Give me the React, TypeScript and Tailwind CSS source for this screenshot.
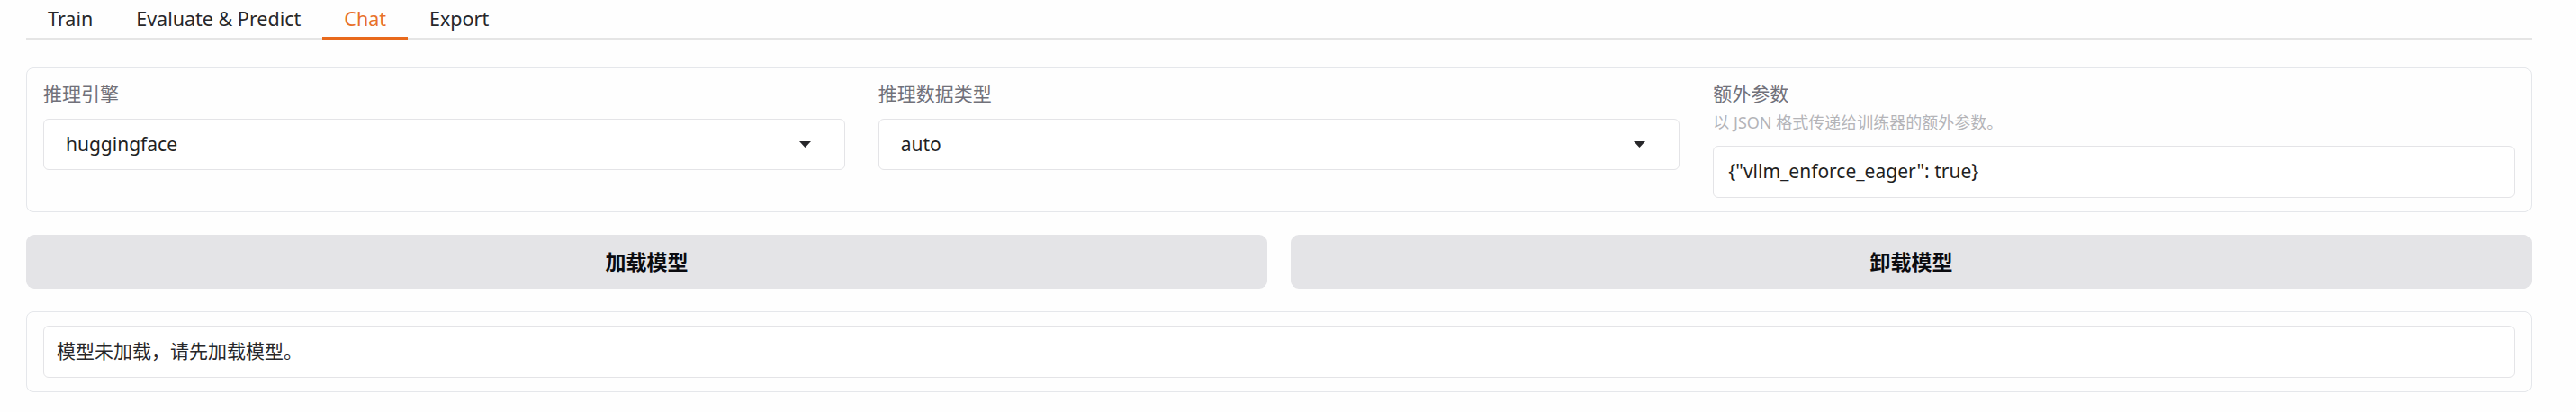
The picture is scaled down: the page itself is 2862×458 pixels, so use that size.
import React from "react";

function Arrow() {
  return (
    <svg width="13" height="7" viewBox="0 0 13 7" className="shrink-0">
      <path d="M0 0 L13 0 L6.5 7 Z" fill="#27272a" />
    </svg>
  );
}

function Dropdown({ label, value }: { label: string; value: string }) {
  return (
    <div className="flex flex-col">
      <div className="text-[21px] leading-[24px] text-[#71717a]">{label}</div>
      <div className="mt-[16px] h-[57px] rounded-[6px] border border-[#e4e4e7] bg-white pl-[24px] pr-[37px] flex items-center justify-between">
        <span className="text-[21px] text-[#1f1f23]">{value}</span>
        <Arrow />
      </div>
    </div>
  );
}

export default function App() {
  const tabs = ["Train", "Evaluate & Predict", "Chat", "Export"];
  return (
    <div className="w-[2862px] h-[458px] bg-[#fefefe] pl-[29px] pr-[49px] font-['Noto_Sans','Noto_Sans_CJK_SC',sans-serif] overflow-hidden">
      <div className="flex h-[44px] border-b-2 border-[#e5e5e5]">
        {tabs.map((t) => (
          <div
            key={t}
            className={
              t === "Chat"
                ? "relative h-[42px] px-[24px] flex items-center text-[21.5px] text-[#e8712a]"
                : "relative h-[42px] px-[24px] flex items-center text-[21.5px] text-[#27272a]"
            }
          >
            {t}
            {t === "Chat" && (
              <span className="absolute left-0 right-0 -bottom-[2px] h-[3px] bg-[#e8691c]" />
            )}
          </div>
        ))}
      </div>

      <div className="mt-[31px] rounded-[8px] border border-[#e5e7eb] bg-[#fefefe] px-[18px] pt-[16px] pb-[15px] grid grid-cols-3 gap-x-[37px] items-start">
        <Dropdown label="推理引擎" value="huggingface" />
        <Dropdown label="推理数据类型" value="auto" />
        <div className="flex flex-col">
          <div className="text-[21px] leading-[24px] text-[#71717a]">额外参数</div>
          <div className="mt-[10px] text-[18px] leading-[20px] text-[#b4b4b8]">
            以 JSON 格式传递给训练器的额外参数。
          </div>
          <div className="mt-[16px] h-[58px] rounded-[6px] border border-[#e4e4e7] bg-white px-[16px] flex items-center text-[21px] text-[#1f1f23]">
            {'{"vllm_enforce_eager": true}'}
          </div>
        </div>
      </div>

      <div className="mt-[25px] flex gap-[26px]">
        <button className="flex-1 h-[60px] rounded-[9px] bg-[#e4e4e7] text-[23px] font-bold text-[#0b0b0f]">
          加载模型
        </button>
        <button className="flex-1 h-[60px] rounded-[9px] bg-[#e4e4e7] text-[23px] font-bold text-[#0b0b0f]">
          卸载模型
        </button>
      </div>

      <div className="mt-[25px] rounded-[8px] border border-[#e5e7eb] bg-[#fefefe] px-[18px] py-[15px]">
        <div className="h-[58px] rounded-[6px] border border-[#e4e4e7] bg-white px-[14px] flex items-center text-[21px] text-[#27272a]">
          模型未加载，请先加载模型。
        </div>
      </div>
    </div>
  );
}
